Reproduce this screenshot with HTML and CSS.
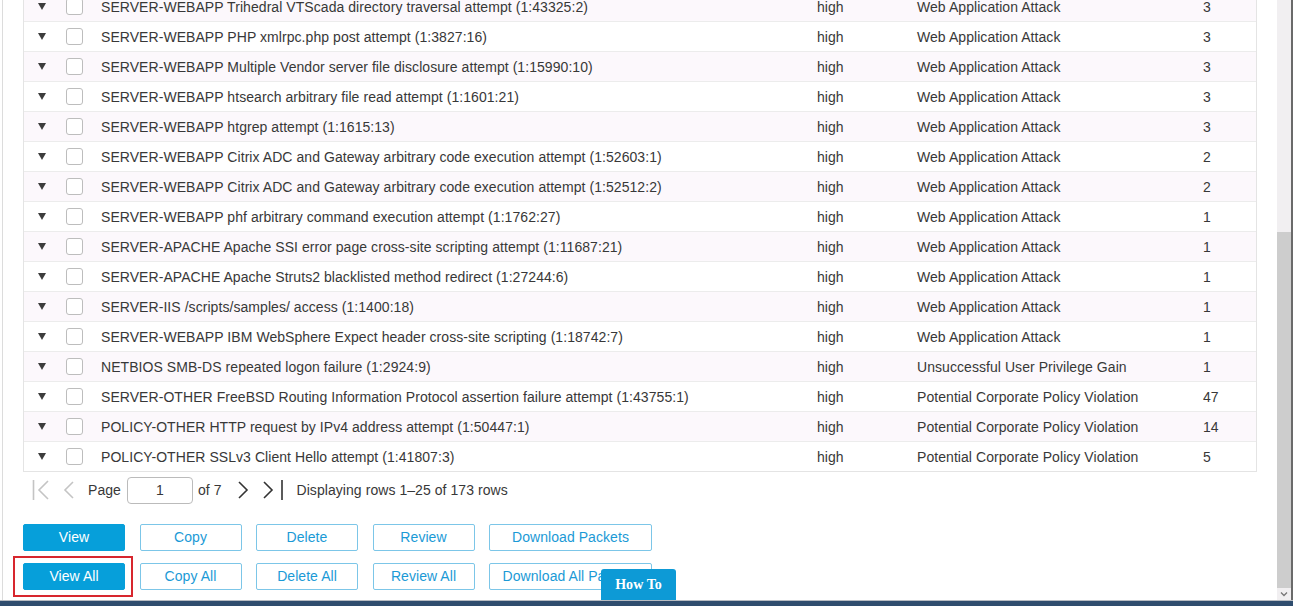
FILE: index.html
```html
<!DOCTYPE html>
<html lang="en">
<head>
    <meta charset="UTF-8">
    <title>Intrusion Events</title>
    <link rel="stylesheet" href="styles.css">
</head>
<body>

    <div class="window">
        <div class="viewport">

            <div class="events">
                <div class="row"><span class="toggle"></span><span class="check"><i></i></span><span class="msg">SERVER-WEBAPP Trihedral VTScada directory traversal attempt (1:43325:2)</span><span>high</span><span>Web Application Attack</span><span>3</span></div>
                <div class="row"><span class="toggle"></span><span class="check"><i></i></span><span class="msg">SERVER-WEBAPP PHP xmlrpc.php post attempt (1:3827:16)</span><span>high</span><span>Web Application Attack</span><span>3</span></div>
                <div class="row"><span class="toggle"></span><span class="check"><i></i></span><span class="msg">SERVER-WEBAPP Multiple Vendor server file disclosure attempt (1:15990:10)</span><span>high</span><span>Web Application Attack</span><span>3</span></div>
                <div class="row"><span class="toggle"></span><span class="check"><i></i></span><span class="msg">SERVER-WEBAPP htsearch arbitrary file read attempt (1:1601:21)</span><span>high</span><span>Web Application Attack</span><span>3</span></div>
                <div class="row"><span class="toggle"></span><span class="check"><i></i></span><span class="msg">SERVER-WEBAPP htgrep attempt (1:1615:13)</span><span>high</span><span>Web Application Attack</span><span>3</span></div>
                <div class="row"><span class="toggle"></span><span class="check"><i></i></span><span class="msg">SERVER-WEBAPP Citrix ADC and Gateway arbitrary code execution attempt (1:52603:1)</span><span>high</span><span>Web Application Attack</span><span>2</span></div>
                <div class="row"><span class="toggle"></span><span class="check"><i></i></span><span class="msg">SERVER-WEBAPP Citrix ADC and Gateway arbitrary code execution attempt (1:52512:2)</span><span>high</span><span>Web Application Attack</span><span>2</span></div>
                <div class="row"><span class="toggle"></span><span class="check"><i></i></span><span class="msg">SERVER-WEBAPP phf arbitrary command execution attempt (1:1762:27)</span><span>high</span><span>Web Application Attack</span><span>1</span></div>
                <div class="row"><span class="toggle"></span><span class="check"><i></i></span><span class="msg">SERVER-APACHE Apache SSI error page cross-site scripting attempt (1:11687:21)</span><span>high</span><span>Web Application Attack</span><span>1</span></div>
                <div class="row"><span class="toggle"></span><span class="check"><i></i></span><span class="msg">SERVER-APACHE Apache Struts2 blacklisted method redirect (1:27244:6)</span><span>high</span><span>Web Application Attack</span><span>1</span></div>
                <div class="row"><span class="toggle"></span><span class="check"><i></i></span><span class="msg">SERVER-IIS /scripts/samples/ access (1:1400:18)</span><span>high</span><span>Web Application Attack</span><span>1</span></div>
                <div class="row"><span class="toggle"></span><span class="check"><i></i></span><span class="msg">SERVER-WEBAPP IBM WebSphere Expect header cross-site scripting (1:18742:7)</span><span>high</span><span>Web Application Attack</span><span>1</span></div>
                <div class="row"><span class="toggle"></span><span class="check"><i></i></span><span class="msg">NETBIOS SMB-DS repeated logon failure (1:2924:9)</span><span>high</span><span>Unsuccessful User Privilege Gain</span><span>1</span></div>
                <div class="row"><span class="toggle"></span><span class="check"><i></i></span><span class="msg">SERVER-OTHER FreeBSD Routing Information Protocol assertion failure attempt (1:43755:1)</span><span>high</span><span>Potential Corporate Policy Violation</span><span>47</span></div>
                <div class="row"><span class="toggle"></span><span class="check"><i></i></span><span class="msg">POLICY-OTHER HTTP request by IPv4 address attempt (1:50447:1)</span><span>high</span><span>Potential Corporate Policy Violation</span><span>14</span></div>
                <div class="row"><span class="toggle"></span><span class="check"><i></i></span><span class="msg">POLICY-OTHER SSLv3 Client Hello attempt (1:41807:3)</span><span>high</span><span>Potential Corporate Policy Violation</span><span>5</span></div>
            </div>

            <!-- paging -->
            <div class="pager">
                <svg class="nav first" width="18" height="22" viewBox="0 0 18 22"><path d="M1.5 1v20M16 2L7 11l9 9" fill="none" stroke="#c4c4c4" stroke-width="1.6"/></svg>
                <svg class="nav prev" width="12" height="22" viewBox="0 0 12 22"><path d="M11 3L3 11l8 8" fill="none" stroke="#c4c4c4" stroke-width="1.6"/></svg>
                <span class="page-label">Page</span>
                <input class="page-input" type="text" value="1">
                <span>of 7</span>
                <svg class="nav next" width="12" height="22" viewBox="0 0 12 22"><path d="M1 3l8 8-8 8" fill="none" stroke="#333" stroke-width="1.6"/></svg>
                <svg class="nav last" width="20" height="22" viewBox="0 0 20 22"><path d="M1 3l8 8-8 8M19 1v20" fill="none" stroke="#333" stroke-width="1.6"/></svg>
                <span class="rows-info">Displaying rows 1–25 of 173 rows</span>
            </div>

            <div class="actions">
                <button class="btn primary">View</button>
                <button class="btn">Copy</button>
                <button class="btn">Delete</button>
                <button class="btn">Review</button>
                <button class="btn wide">Download Packets</button>
            </div>
            <div class="actions">
                <span class="highlight"><button class="btn primary">View All</button></span>
                <button class="btn">Copy All</button>
                <button class="btn">Delete All</button>
                <button class="btn">Review All</button>
                <button class="btn wide">Download All Packets</button>
            </div>

            <div class="howto">How To</div>
        </div>

        <div class="scrollbar">
            <div class="thumb"></div>
            <div class="arrow">
                <svg width="8" height="6" viewBox="0 0 8 6"><path d="M1 1.5l3 3 3-3" fill="none" stroke="#777" stroke-width="1.3"/></svg>
            </div>
        </div>
        <div class="edge"></div>
    </div>
    <div class="taskbar"></div>

</body>
</html>
```

FILE: styles.css
```css
body {
    margin: 0;
    font-family: 'Liberation Sans', Arial, sans-serif;
    font-size: 14px;
    letter-spacing: 0.06px;
    color: #383838;
    background: #fff;
    overflow: hidden;
}
.window {
    display: flex;
    height: 600px;
    overflow: hidden;
}
.viewport {
    position: relative;
    flex: 1;
    margin-left: 2px;
    border-left: 1px solid #dcdcdc;
    padding: 0 20px 0 20px;
    overflow: hidden;
}
.events {
    margin-top: -8px;
    border: 1px solid #e4e4e4;
    border-top: none;
}
.row {
    display: grid;
    grid-template-columns: 36px 41px 716px 100px 286px 1fr;
    align-items: center;
    height: 29px;
    border-bottom: 1px solid #ececec;
    background: #fff;
}
.row:nth-child(odd) {
    background: #fcf8fc;
}
.row:last-child {
    border-bottom: none;
}
.toggle {
    justify-self: start;
    margin-left: 14px;
    width: 0;
    height: 0;
    border-left: 4px solid transparent;
    border-right: 4px solid transparent;
    border-top: 7px solid #3c3c3c;
}
.check i {
    display: block;
    margin-left: 6px;
    width: 15px;
    height: 15px;
    border: 1px solid #bdbdbd;
    border-radius: 3px;
    background: #fff;
}
.pager {
    display: flex;
    align-items: center;
    height: 28px;
    margin-top: 4px;
    padding-left: 9px;
}
.nav {
    display: block;
}
.first { margin-right: 12px; }
.prev { margin-right: 14px; }
.page-label { margin-right: 6px; }
.page-input {
    width: 66px;
    height: 27px;
    box-sizing: border-box;
    border: 1px solid #bbb;
    border-radius: 4px;
    text-align: center;
    font-family: inherit;
    font-size: 14px;
    color: #383838;
    margin-right: 5px;
    padding: 0;
}
.next { margin-left: 16px; margin-right: 13px; }
.last { margin-right: 14px; }
.actions {
    display: flex;
    gap: 14.5px;
    margin-top: 20px;
}
.actions + .actions {
    margin-top: 12px;
}
.btn {
    width: 102px;
    height: 27px;
    box-sizing: border-box;
    border: 1px solid #7cc6e8;
    border-radius: 2px;
    background: #fff;
    color: #1b9ad6;
    font-family: inherit;
    font-size: 14px;
    letter-spacing: 0.06px;
    padding: 0 0 2px;
    white-space: nowrap;
    cursor: pointer;
}
.btn.wide {
    width: 163px;
}
.btn.primary {
    background: #069fda;
    border-color: #069fda;
    color: #fff;
}
.highlight {
    display: block;
    border: 2px solid #d7262e;
    padding: 5px 6px 5px 8px;
    margin: -7px -8px -7px -10px;
}
.highlight .btn {
    display: block;
}
.howto {
    position: absolute;
    left: 598px;
    top: 569px;
    width: 75px;
    height: 31px;
    background: #0d9ad6;
    border-radius: 3px 3px 0 0;
    color: #fff;
    font-family: 'Liberation Serif', 'Times New Roman', serif;
    font-weight: bold;
    font-size: 14px;
    line-height: 31px;
    text-align: center;
}
.scrollbar {
    position: relative;
    width: 14px;
    background: #f1eff1;
}
.thumb {
    position: absolute;
    left: 0;
    right: 0;
    top: 232px;
    height: 356px;
    background: #cdcdcd;
}
.arrow {
    position: absolute;
    left: 0;
    right: 0;
    bottom: 0;
    height: 12px;
    display: flex;
    justify-content: center;
    align-items: center;
    background: #f1eff1;
}
.edge {
    width: 2px;
    background: #6a6a6a;
}
.taskbar {
    height: 6px;
    border-top: 1px solid #b8bcc2;
    background: #2f4d6e;
}
```
